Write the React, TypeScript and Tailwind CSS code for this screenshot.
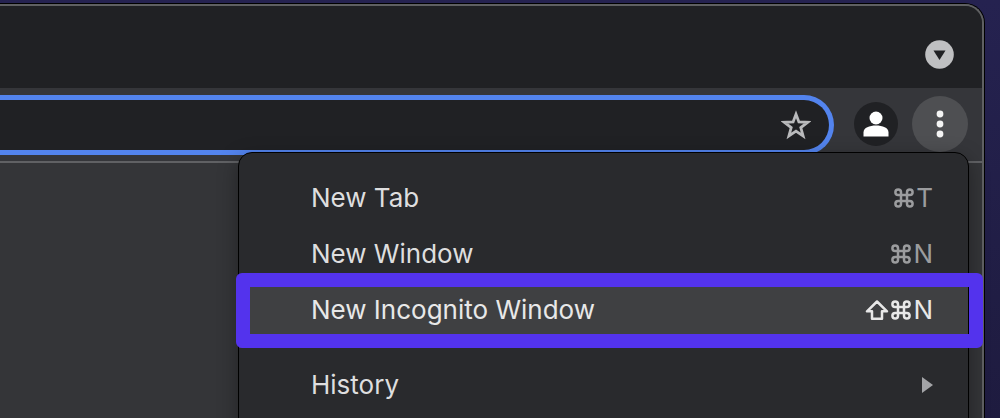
import React from 'react';

interface MenuEntry {
  label: string;
  shift?: boolean;
  shortcut?: string;
  submenu?: boolean;
  highlighted?: boolean;
  separated?: boolean;
}

const entries: MenuEntry[] = [
  { label: 'New Tab', shortcut: 'T' },
  { label: 'New Window', shortcut: 'N' },
  { label: 'New Incognito Window', shift: true, shortcut: 'N', highlighted: true },
  { label: 'History', submenu: true, separated: true },
];

const CommandIcon: React.FC = () => (
  <svg role="img" aria-label="Command" className="h-5 w-5" viewBox="0 0 20 20" fill="none" stroke="currentColor" strokeWidth="2.5">
    <path d="M7 7V4.200A2.800 2.800 0 1 0 4.200 7H15.800A2.800 2.800 0 1 0 13 4.200V15.800A2.800 2.800 0 1 0 15.800 13H4.200A2.800 2.800 0 1 0 7 15.800z" />
  </svg>
);

const ShiftIcon: React.FC = () => (
  <svg
    role="img"
    aria-label="Shift"
    className="h-5 w-6"
    viewBox="0 0 24 20"
    fill="none"
    stroke="currentColor"
    strokeWidth="2.500"
    strokeLinejoin="round"
  >
    <path d="M12 1.500L2 11.300h5V18.700h10V11.300h5z" />
  </svg>
);

const MenuRow: React.FC<{ entry: MenuEntry }> = ({ entry }) => (
  <li role="none">
    {entry.separated && <div role="separator" className="my-[9px] h-px bg-[#47484b]" />}
    <button
      type="button"
      role="menuitem"
      className={`relative flex h-14 w-full items-center justify-between pl-[72px] pr-[35px] text-left ${
        entry.highlighted ? 'bg-[#3f4042] text-[#e8e8e8]' : 'text-[#dededf]'
      }`}
    >
      {entry.highlighted && (
        <span className="absolute -bottom-[10px] -left-[3px] -right-[15px] -top-[9px] z-10 rounded-md border-[14px] border-[#5333ed]" />
      )}
      <span>{entry.label}</span>
      {entry.shortcut && (
        <span className={`flex items-center gap-[2px] ${entry.highlighted ? '' : 'text-[#9b9c9e]'}`}>
          {entry.shift && <ShiftIcon />}
          <CommandIcon />
          <span>{entry.shortcut}</span>
        </span>
      )}
      {entry.submenu && (
        <svg className="h-4 w-[11px]" viewBox="0 0 11 16" fill="#a3a4a7">
          <path d="M0 0l11 8-11 8z" />
        </svg>
      )}
    </button>
  </li>
);

const App: React.FC = () => {
  return (
    <div className="h-screen overflow-hidden bg-gradient-to-b from-[#252250] to-[#1e1b3f] pr-[15px] pt-[3px] font-['Inter',sans-serif] text-[26px] font-normal leading-8">
      <div className="relative flex h-full flex-col rounded-tr-[20px] border-r border-t border-black bg-[#343538]">
        <div className="flex flex-1 flex-col rounded-tr-[19px] border-r-2 border-t-2 border-[#5f6062]">
          {/* Tab strip */}
          <header className="flex h-[82px] items-center justify-end rounded-tr-[17px] bg-[#202124] pb-2 pr-7 pt-[22px]">
            <button type="button" aria-label="Search tabs" className="rounded-full">
              <svg className="h-[29px] w-[29px]" viewBox="0 0 29 29">
                <circle cx="14.5" cy="14.5" r="14.3" fill="#bfc0c2" />
                <path d="M8.500 10.500h12l-6 9.500z" fill="#202124" />
              </svg>
            </button>
          </header>

          {/* Toolbar */}
          <div className="flex h-[75px] items-start border-b-2 border-[#606164] bg-[#35363a] pr-[14px] pt-2">
            <div className="-mt-px mr-5 flex h-[60px] flex-1 items-center rounded-r-full border-y-[5px] border-r-[5px] border-[#5384ee] bg-[#202124] pr-[18px]">
              <input
                type="text"
                aria-label="Address and search bar"
                className="h-full min-w-0 flex-1 bg-transparent px-4 text-[#e8e8e8] outline-none"
              />
              <button type="button" aria-label="Bookmark this tab">
                <svg className="h-[30px] w-[30px]" viewBox="0 0 30 30" fill="none" stroke="#b9babc" strokeWidth="2.800">
                  <path d="M15 4.200l2.900 7.700 8.700.4-6.800 5.300 2.300 8.300-7.100-4.700-7.100 4.700 2.300-8.300-6.800-5.300 8.700-.4z" />
                </svg>
              </button>
            </div>
            <button
              type="button"
              aria-label="Profile"
              className="mr-[14px] mt-[6px] flex h-11 w-11 items-center justify-center rounded-full bg-[#202124]"
            >
              <svg className="h-[26px] w-[26px]" viewBox="0 0 26 26" fill="#fff">
                <circle cx="13" cy="7" r="6.500" />
                <path d="M.5 25.500v-4c0-5 6-7 12.500-7s12.500 2 12.500 7v4z" />
              </svg>
            </button>
            <button
              type="button"
              aria-label="Menu"
              className="flex h-14 w-14 items-center justify-center rounded-full bg-[#4e4f52]"
            >
              <svg className="h-7 w-2" viewBox="0 0 8 28" fill="#f4f4f4">
                <circle cx="4" cy="4" r="3.400" />
                <circle cx="4" cy="14" r="3.400" />
                <circle cx="4" cy="24" r="3.400" />
              </svg>
            </button>
          </div>

          <main className="flex-1 bg-[#343538]" />
        </div>

        {/* Main menu */}
        <ul
          role="menu"
          className="absolute right-[15px] top-[148px] w-[731px] rounded-t-[14px] border border-black bg-[#292a2d] pb-4 pt-[17px] shadow-[0_6px_20px_rgba(0,0,0,0.35)]"
        >
          {entries.map((entry) => (
            <MenuRow key={entry.label} entry={entry} />
          ))}
        </ul>
      </div>
    </div>
  );
};

export default App;
